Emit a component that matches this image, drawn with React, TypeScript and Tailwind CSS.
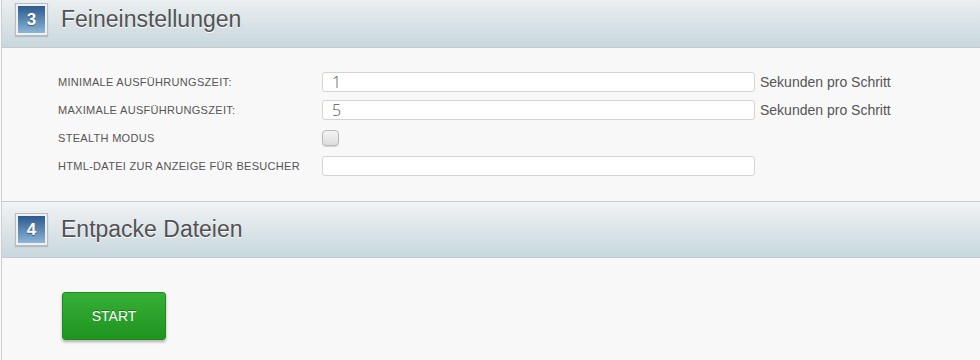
import React from "react";

const SectionHeader = ({ num, title }: { num: string; title: string }) => (
  <div className="flex items-center h-[57px] border-y border-[#c6cacc] bg-gradient-to-b from-[#f1f3f4] to-[#c8d7dd] pl-[13px]">
    <div className="w-[33px] h-[33px] border border-[#b9bcbe] bg-[#eef0f1] p-[2px] shadow-[0_1px_1px_rgba(0,0,0,0.15)]">
      <div className="w-full h-full bg-gradient-to-b from-[#2c5a8e] to-[#8cb6d6] flex items-center justify-center text-white font-bold text-[17px] [text-shadow:0_1px_1px_rgba(0,0,0,0.4)]">
        {num}
      </div>
    </div>
    <h2 className="ml-[13px] text-[23px] text-[#525252] [text-shadow:0_1px_0_#fff] leading-none">{title}</h2>
  </div>
);

const Row = ({ label, children }: { label: string; children: React.ReactNode }) => (
  <div className="flex items-center h-[28px]">
    <div className="w-[264px] text-[11px] text-[#555] tracking-[0.3px]">{label}</div>
    {children}
  </div>
);

const TextInput = ({ value }: { value: string }) => (
  <div className="w-[433px] h-[20px] border border-[#d4d4d4] rounded-[3px] bg-white flex items-center pl-[9px] text-[16px] text-[#555] font-['Open_Sans',sans-serif] font-light leading-none">
    {value}
  </div>
);

export default function App() {
  return (
    <div className="w-[980px] h-[360px] overflow-hidden bg-[#f8f8f8] font-['Liberation_Sans',sans-serif]">
      <div className="-mt-[9px] ml-[1px] border-l border-[#cfcfcf]">
        <SectionHeader num="3" title="Feineinstellungen" />
        <div className="h-[153px] pt-[20px] pl-[56px]">
          <Row label="MINIMALE AUSFÜHRUNGSZEIT:">
            <TextInput value="1" />
            <span className="ml-[5px] text-[14px] text-[#555]">Sekunden pro Schritt</span>
          </Row>
          <Row label="MAXIMALE AUSFÜHRUNGSZEIT:">
            <TextInput value="5" />
            <span className="ml-[5px] text-[14px] text-[#555]">Sekunden pro Schritt</span>
          </Row>
          <Row label="STEALTH MODUS">
            <div className="w-[17px] h-[16px] rounded-[4px] border border-[#b8b8b8] bg-gradient-to-b from-[#f4f4f4] to-[#dcdcdc] shadow-[0_1px_1px_rgba(0,0,0,0.15)]" />
          </Row>
          <Row label="HTML-DATEI ZUR ANZEIGE FÜR BESUCHER">
            <TextInput value="" />
          </Row>
        </div>
        <SectionHeader num="4" title="Entpacke Dateien" />
        <div className="pt-[34px] pl-[60px] h-[120px]">
          <button className="w-[104px] h-[48px] rounded-[3px] border border-[#1f8a1f] bg-gradient-to-b from-[#36b036] to-[#1f941f] text-white text-[14px] [text-shadow:0_-1px_0_rgba(0,0,0,0.3)] shadow-[0_2px_3px_rgba(0,0,0,0.3)]">
            START
          </button>
        </div>
      </div>
    </div>
  );
}
